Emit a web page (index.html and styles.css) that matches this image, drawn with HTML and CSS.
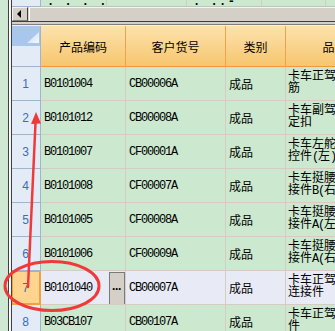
FILE: index.html
```html
<!DOCTYPE html>
<html lang="zh-CN">
<head>
<meta charset="utf-8">
<title>产品列表</title>
<link rel="stylesheet" href="styles.css">
</head>
<body>
<div class="app">
  <div class="side"></div>
  <div class="edge"></div>
  <div class="main">
    <div class="prev">
      <div class="prev-rh"></div>
      <div class="prev-c p1"><span class="dots">.&nbsp;.&nbsp;.&nbsp;.</span></div>
      <div class="prev-c p2"></div>
      <div class="prev-c p3"><span class="dots">.&nbsp;..-</span></div>
      <div class="prev-c p4"></div>
      <div class="prev-c p5"></div>
    </div>
    <div class="hscroll">
      <div class="sb-btn"><span class="tri"></span></div>
      <div class="sb-thumb"></div>
    </div>
    <div class="sep"></div>
    <div class="grid">
      <div class="corner"><div class="corner-top"><span class="corner-tri"></span></div></div>
      <div class="hd">产品编码</div>
      <div class="hd">客户货号</div>
      <div class="hd">类别</div>
      <div class="hd">品名</div>

      <div class="rh">1</div>
      <div class="c code">B0101004</div>
      <div class="c code">CB00006A</div>
      <div class="c">成品</div>
      <div class="c name"><span class="ln">卡车正驾驶室加强</span><span class="ln">筋</span></div>

      <div class="rh">2</div>
      <div class="c code">B0101012</div>
      <div class="c code">CB00008A</div>
      <div class="c">成品</div>
      <div class="c name"><span class="ln">卡车副驾驶室固</span><span class="ln">定扣</span></div>

      <div class="rh">3</div>
      <div class="c code">B0101007</div>
      <div class="c code">CF00001A</div>
      <div class="c">成品</div>
      <div class="c name"><span class="ln">卡车左舵转向操</span><span class="ln">控件<span class="asc">(</span>左<span class="asc">)</span></span></div>

      <div class="rh">4</div>
      <div class="c code">B0101008</div>
      <div class="c code">CF00007A</div>
      <div class="c">成品</div>
      <div class="c name"><span class="ln">卡车挺腰板连</span><span class="ln">接件<span class="asc">B(</span>右<span class="asc">)</span></span></div>

      <div class="rh">5</div>
      <div class="c code">B0101005</div>
      <div class="c code">CF00008A</div>
      <div class="c">成品</div>
      <div class="c name"><span class="ln">卡车挺腰板连</span><span class="ln">接件<span class="asc">A(</span>左<span class="asc">)</span></span></div>

      <div class="rh">6</div>
      <div class="c code">B0101006</div>
      <div class="c code">CF00009A</div>
      <div class="c">成品</div>
      <div class="c name"><span class="ln">卡车挺腰板连</span><span class="ln">接件<span class="asc">A(</span>右<span class="asc">)</span></span></div>

      <div class="rh rh-sel">7</div>
      <div class="c code sel edit"><span>B0101040</span><span class="ell">···</span></div>
      <div class="c code sel">CB00007A</div>
      <div class="c sel">成品</div>
      <div class="c name sel"><span class="ln">卡车正驾驶室</span><span class="ln">连接件</span></div>

      <div class="rh">8</div>
      <div class="c code">B03CB107</div>
      <div class="c code">CB00107A</div>
      <div class="c">成品</div>
      <div class="c name"><span class="ln">卡车正驾驶室连接</span><span class="ln">件</span></div>
    </div>
  </div>
</div>
<svg class="marks" width="335" height="331" viewBox="0 0 335 331">
  <ellipse cx="52" cy="286" rx="47" ry="24.5" fill="none" stroke="#f03a3a" stroke-width="3"/>
  <line x1="28" y1="287" x2="35.6" y2="121" stroke="#f03a3a" stroke-width="2.5" stroke-linecap="round"/>
  <polygon points="36,112 31,124 41,123.5" fill="#f03a3a"/>
</svg>
</body>
</html>
```

FILE: styles.css
```css
html, body {
  margin: 0;
  padding: 0;
}
body {
  width: 335px;
  height: 331px;
  overflow: hidden;
  background: #cfe8d3;
  font-family: "Noto Sans CJK SC", "Liberation Sans", sans-serif;
  font-size: 12px;
  color: #000;
  position: relative;
}
.app {
  display: flex;
  height: 331px;
}
.side {
  width: 8px;
  flex: none;
  background: #cfe8d3;
}
.edge {
  width: 2px;
  flex: none;
  border-left: 1px solid #404040;
  border-right: 1px solid #404040;
  background: #ffffff;
  box-shadow: inset -1px 0 0 #f4f4f4;
}
.main {
  flex: 1;
  min-width: 0;
  overflow: hidden;
  display: flex;
  flex-direction: column;
}

/* previous grid bottom strip */
.prev {
  display: grid;
  grid-template-columns: 29px 66px 80px 75px 64px 200px;
  height: 7px;
  flex: none;
  overflow: hidden;
}
.prev-rh {
  background: #e3ebf7;
  border-right: 1px solid #9eb5cd;
  border-bottom: 1px solid #9eb5cd;
}
.prev-c {
  background: #cce8cf;
  border-right: 1px solid #d3cbc2;
  border-bottom: 1px solid #b9c7bb;
  overflow: hidden;
  padding-left: 6px;
}
.dots {
  font-family: "Liberation Mono", monospace;
  font-weight: bold;
  font-size: 12px;
  line-height: 7px;
  letter-spacing: 1.5px;
  white-space: nowrap;
  display: block;
  margin-top: -1px;
}

/* horizontal scrollbar */
.hscroll {
  height: 14px;
  flex: none;
  display: flex;
  background: #d4d0c8;
  border-bottom: 1px solid #404040;
}
.sb-btn {
  width: 16px;
  flex: none;
  box-sizing: border-box;
  border-top: 1px solid #f4f4f4;
  border-left: 1px solid #f4f4f4;
  border-right: 1px solid #404040;
  border-bottom: 1px solid #808080;
  background: #d4d0c8;
  display: flex;
  align-items: center;
  justify-content: center;
}
.tri {
  width: 0;
  height: 0;
  border-top: 4px solid transparent;
  border-bottom: 4px solid transparent;
  border-right: 4px solid #000;
  margin-right: 2px;
}
.sb-thumb {
  flex: 1;
  box-sizing: border-box;
  margin-left: 1px;
  border-top: 1px solid #f4f4f4;
  border-left: 1px solid #ffffff;
  background: #d4d0c8;
}
.sep {
  height: 1px;
  flex: none;
  background: #d4d0c8;
  border-top: 1px solid #d4d0c8;
  border-bottom: 1px solid #808080;
  box-shadow: 0 1px 0 #f0f0f0;
  margin-bottom: 1px;
}

/* main grid */
.grid {
  display: grid;
  grid-template-columns: 29px 85px 100px 60px 98px;
  grid-template-rows: 41px repeat(8, 34px);
  flex: none;
}
.grid > div {
  box-sizing: border-box;
  min-width: 0;
  overflow: hidden;
}
.corner {
  background: #e3ebf7;
  border-right: 1px solid #9eb5cd;
  border-bottom: 1px solid #9eb5cd;
}
.corner-top {
  height: 20px;
  background: #a9c6ec;
  position: relative;
}
.corner-tri {
  position: absolute;
  right: 1px;
  bottom: 3px;
  width: 12px;
  height: 11px;
  background: linear-gradient(135deg, #c4d8f2 0%, #f4f8fd 100%);
  clip-path: polygon(100% 0, 100% 100%, 0 100%);
}
.hd {
  background: linear-gradient(#fde2ad, #f6c66e);
  border-right: 1px solid #f3a24c;
  border-bottom: 1px solid #f0983c;
  display: flex;
  align-items: center;
  justify-content: center;
  white-space: nowrap;
  padding-top: 1px;
}
.rh {
  background: #e3ebf7;
  border-right: 1px solid #9eb5cd;
  border-bottom: 1px solid #9eb5cd;
  color: #3b6db4;
  font-family: "Liberation Sans", sans-serif;
  font-size: 12px;
  display: flex;
  align-items: center;
  justify-content: center;
  padding-right: 1px;
}
.rh-sel {
  background: #ffd48f;
  box-shadow: inset 0 0 0 1px #f2a142;
  border-right-color: #f2a142;
  border-bottom-color: #f2a142;
}
.c {
  background: #cce8cf;
  border-right: 1px solid #d5ccc3;
  border-bottom: 1px solid #d5ccc3;
  display: flex;
  align-items: center;
  padding-left: 3px;
  white-space: nowrap;
}
.code {
  font-family: "Liberation Mono", monospace;
  font-size: 12px;
  letter-spacing: -1.2px;
  padding-top: 1px;
}
.name {
  flex-direction: column;
  align-items: flex-start;
  justify-content: flex-start;
  padding-left: 2px;
  padding-top: 2px;
  line-height: 12px;
}
.ln {
  display: block;
  height: 12px;
  white-space: nowrap;
}
.asc {
  font-family: "Liberation Mono", monospace;
  letter-spacing: -1.2px;
}
.sel {
  background: #e8ebf6;
}
.edit {
  padding-right: 0;
  align-items: center;
}
.ell {
  margin-left: auto;
  align-self: stretch;
  width: 16px;
  box-sizing: border-box;
  background: #d4d0c8;
  border: 1px solid #7a7a7a;
  font-family: "Liberation Sans", sans-serif;
  font-weight: bold;
  font-size: 12px;
  letter-spacing: -1px;
  display: flex;
  align-items: center;
  justify-content: center;
  padding-right: 1px;
  margin-bottom: -1px;
}

/* annotation overlay */
.marks {
  position: absolute;
  left: 0;
  top: 0;
  pointer-events: none;
}
```
